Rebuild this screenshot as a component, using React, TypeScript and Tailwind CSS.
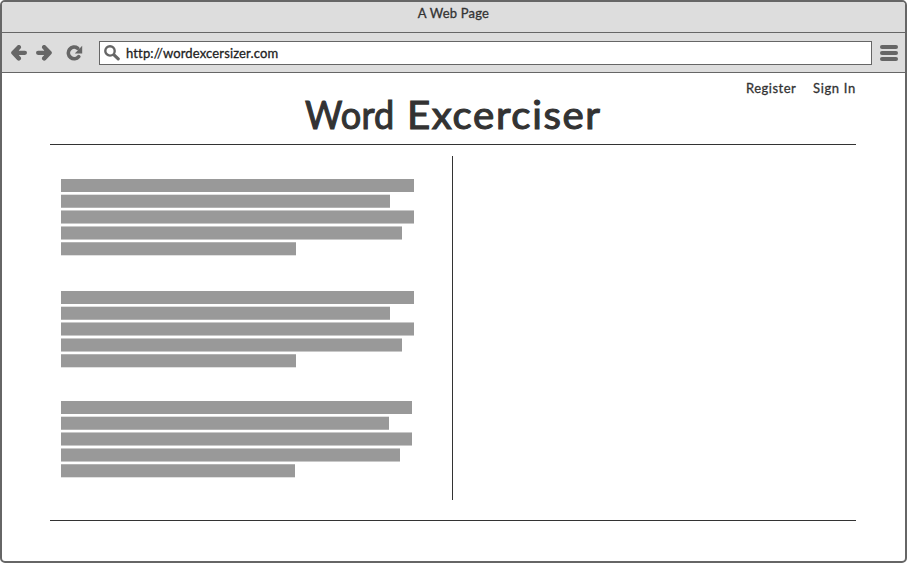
const ICON = "#666666";

type Bar = { width: string; edge: string };

const wideBars: Bar[] = [
  { width: "w-[353px]", edge: "h-[13px]" },
  { width: "w-[329px]", edge: "h-3.5 border-y border-t-[#e0e0e0] border-b-[#b2b2b2]" },
  { width: "w-[353px]", edge: "h-3.5 border-y border-[#c8c8c8]" },
  { width: "w-[341px]", edge: "h-3.5 border-y border-[#c8c8c8]" },
  { width: "w-[235px]", edge: "h-3.5 border-y border-t-[#b2b2b2] border-b-[#e0e0e0]" },
];

const narrowBars: Bar[] = [
  { width: "w-[351px]", edge: "h-[13px]" },
  { width: "w-[328px]", edge: "h-3.5 border-y border-t-[#e0e0e0] border-b-[#b2b2b2]" },
  { width: "w-[351px]", edge: "h-3.5 border-y border-[#c8c8c8]" },
  { width: "w-[339px]", edge: "h-3.5 border-y border-[#c8c8c8]" },
  { width: "w-[234px]", edge: "h-3.5 border-y border-t-[#b2b2b2] border-b-[#e0e0e0]" },
];

function Paragraph({ bars }: { bars: Bar[] }) {
  return (
    <div className="flex flex-col gap-0.5">
      {bars.map((bar, i) => (
        <div key={i} className={`bg-[#999999] ${bar.width} ${bar.edge}`} />
      ))}
    </div>
  );
}

function ArrowIcon({ flipped = false }: { flipped?: boolean }) {
  return (
    <svg width="16" height="16" viewBox="0 0 16 16" className={flipped ? "-scale-x-100" : ""}>
      <path d="M7.8 2.2 2.4 7.8 7.8 13.4" fill={ICON} stroke={ICON} strokeWidth="4.4" strokeLinecap="round" strokeLinejoin="round" />
      <path d="M4 7.8H13.9" fill="none" stroke={ICON} strokeWidth="4.2" strokeLinecap="round" />
    </svg>
  );
}

function ReloadIcon() {
  return (
    <svg width="17" height="16" viewBox="0 0 17 16">
      <path d="M12.7 11.6A5.8 5.8 0 1 1 11.6 3.2" fill="none" stroke={ICON} strokeWidth="3.7" strokeLinecap="round" />
      <path d="M16.2 .8V8.4H8.8Z" fill={ICON} />
    </svg>
  );
}

function SearchIcon() {
  return (
    <svg width="17" height="16" viewBox="0 0 17 16">
      <circle cx="6" cy="5.9" r="4.7" fill="none" stroke={ICON} strokeWidth="2.4" />
      <path d="M10 9.8 14.2 13.8" fill="none" stroke={ICON} strokeWidth="3.2" strokeLinecap="round" />
    </svg>
  );
}

export default function App() {
  return (
    <div className="flex h-[563px] w-[907px] flex-col overflow-hidden rounded-[5px] border-2 border-[#666666] bg-white font-[Lato,sans-serif] text-[13px] font-normal text-[#333333]">
      <header className="flex h-[31px] shrink-0 justify-center border-b border-[#666666] bg-[#dddddd] pt-0.5">
        <span className="leading-[19px] tracking-[0.2px] [-webkit-text-stroke:0.3px_#333333]">A Web Page</span>
      </header>
      <nav className="flex h-10 shrink-0 items-start border-b border-[#666666] bg-[#dddddd] pt-2 pl-[9px]">
        <div className="flex gap-[9px] pt-1">
          <ArrowIcon />
          <ArrowIcon flipped />
        </div>
        <div className="ml-[14px] pt-1">
          <ReloadIcon />
        </div>
        <div className="ml-[16px] flex h-6 w-[773px] border border-[#666666] bg-white pl-1">
          <div className="pt-[3px]">
            <SearchIcon />
          </div>
          <span className="ml-[5px] leading-[23px] tracking-[0.15px] text-[#222222] [-webkit-text-stroke:0.3px_#222222]">http://wordexcersizer.com</span>
        </div>
        <div className="ml-2 flex flex-col gap-0.5 pt-1">
          <div className="h-1 w-[18px] rounded-full bg-[#666666]" />
          <div className="h-1 w-[18px] rounded-full bg-[#666666]" />
          <div className="h-1 w-[18px] rounded-full bg-[#666666]" />
        </div>
      </nav>
      <main className="flex flex-col px-12">
        <div className="flex h-[23px] pt-[5px] pl-[696px] leading-[20px] whitespace-nowrap [-webkit-text-stroke:0.3px_#333333]">
          <span className="w-[67px] shrink-0 tracking-[0.5px]">Register</span>
          <span className="shrink-0 tracking-[0.65px]">Sign In</span>
        </div>
        <h1 className="flex h-12 pl-[255px] text-[38px] leading-[36px] font-normal [-webkit-text-stroke:1.1px_#333333]">
          <span className="w-[102px] origin-left scale-x-[0.95] tracking-[0.3px]">Word</span>
          <span className="origin-left scale-x-[1.06] tracking-[1.5px]">Excerciser</span>
        </h1>
        <div className="h-px w-[806px] bg-[#333333]" />
        <section className="mt-[11px] flex h-[344px]">
          <div className="flex w-[402px] flex-col pt-[23px] pl-[11px]">
            <Paragraph bars={wideBars} />
            <div className="mt-[35px]">
              <Paragraph bars={wideBars} />
            </div>
            <div className="mt-[33px]">
              <Paragraph bars={narrowBars} />
            </div>
          </div>
          <div className="w-px bg-[#333333]" />
        </section>
        <div className="mt-5 h-px w-[806px] bg-[#333333]" />
      </main>
    </div>
  );
}
